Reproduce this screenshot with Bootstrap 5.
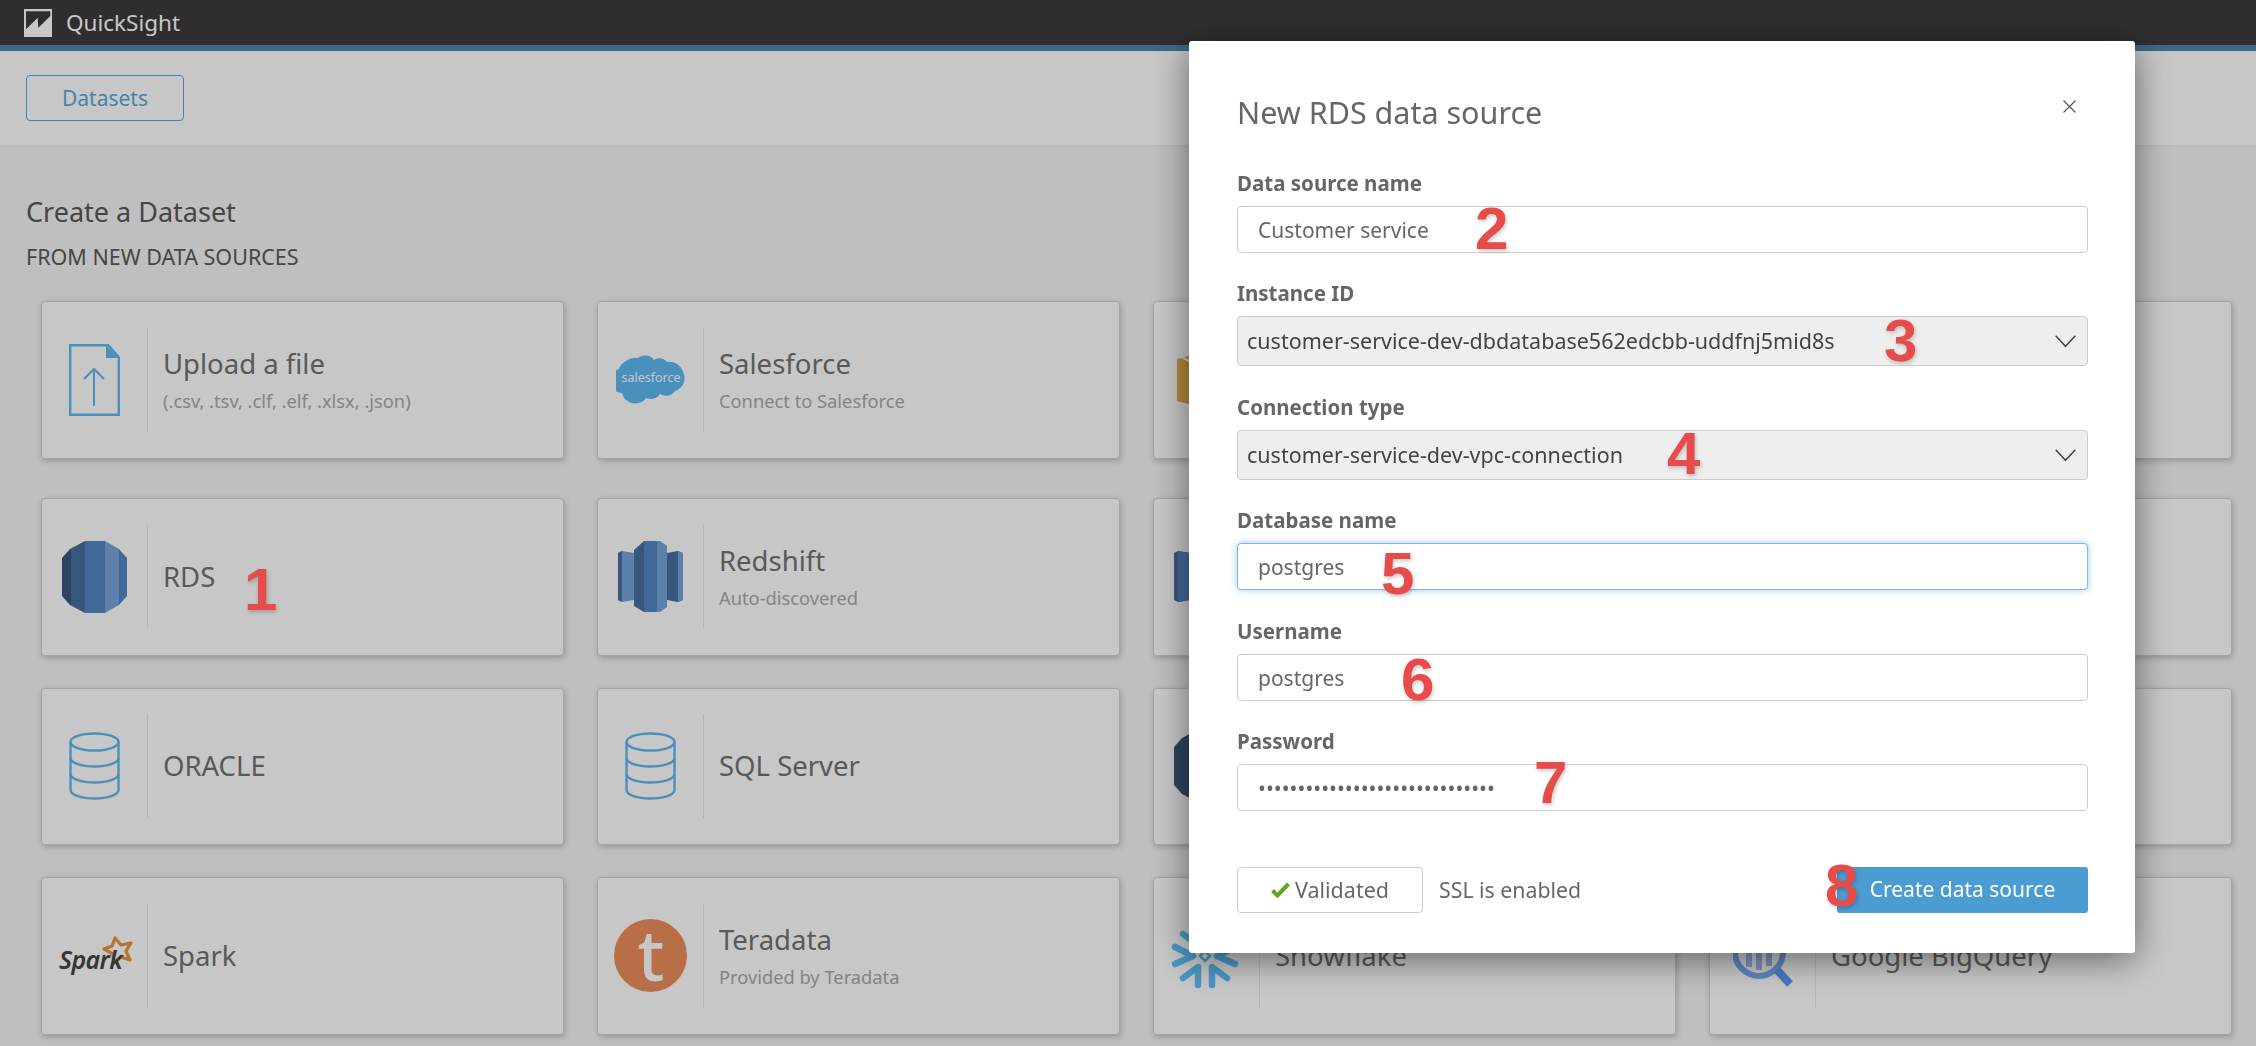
<!DOCTYPE html>
<html lang="en">
<head>
<meta charset="UTF-8">
<meta name="viewport" content="width=device-width, initial-scale=1">
<title>QuickSight</title>
<link href="https://cdn.jsdelivr.net/npm/bootstrap@5.3.0/dist/css/bootstrap.min.css" rel="stylesheet">
<style>
    html, body { height: 100%; overflow: hidden; }
    body { background: #f5f5f5; font-family: "Noto Sans", "Open Sans", sans-serif; color: #727272; }

    .qs-top { height: 45px; background: #3c3c3c; color: #fff; padding-left: 24px; gap: 14px; font-size: 22.5px; }
    .qs-strip { height: 6px; background: #4e85ab; }
    .qs-sub { height: 96px; background: #fff; border-bottom: 2px solid #efefef; padding: 24px 26px 0; }
    .qs-tab { width: 158px; height: 46px; line-height: 44px; padding: 0; font-size: 21px; color: #5ba8da; border: 1px solid #5ba8da; border-radius: 4px; background: transparent; }

    .qs-main { padding: 49px 24px 0 26px; }
    .qs-h { font-size: 27px; line-height: 32px; font-weight: 400; color: #5a5a5a; margin: 0; }
    .qs-sec { font-size: 21.500px; line-height: 26px; color: #5a5a5a; margin: 16px 0 0; }

    .src-wrap { padding: 31px 0 0 15px; }
    .src-row { --bs-gutter-x: 33px; --bs-gutter-y: 32px; }
    .src-first { margin-bottom: 7.500px; }
    .src-card { height: 157.500px; flex-direction: row; align-items: center; border: 1px solid #d4d4d4; border-radius: 4px; background: #fff; box-shadow: 1px 2px 6px rgba(0,0,0,.22); }
    .src-icon { width: 106px; height: 104px; border-right: 1px solid #eaeaea; flex-shrink: 0; }
    .src-text { padding-left: 15px; }
    .src-title { font-size: 27.500px; line-height: 36px; color: #727272; }
    .src-note { font-size: 18.300px; line-height: 24px; margin-top: 7px; color: #aaa; }

    .modal-backdrop { --bs-backdrop-opacity: .22; }
    .rds-dialog { margin: 41px 0 0 1189px; width: 946px; max-width: none; }
    .rds-box { height: 912px; border: 0; border-radius: 3px; box-shadow: 0 6px 36px rgba(0,0,0,.5); color: #666; }
    .rds-head { padding: 51px 47px 39px 48px; border: 0; }
    .rds-head h1 { font-size: 30.500px; line-height: 40px; font-weight: 400; color: #666; margin: 0; }
    .rds-close { width: 13px; height: 13px; padding: 0; margin: -1px 0 0; background: none; border: 0; position: absolute; left: 874px; top: 60px; }
    .rds-body { flex: 0 0 auto; padding: 0 47px 0 48px; }
    .rds-field { margin-bottom: 28px; }
    .rds-gap { margin-bottom: 29px; }
    .rds-field label { display: block; font-size: 20.500px; line-height: 24px; font-weight: 700; color: #666; margin-bottom: 11px; }
    .rds-input { height: 47px; padding: 0 20px; font-size: 21px; color: #666; border: 1px solid #ccc; border-radius: 4px; }
    .rds-input.is-on { border-color: #7fbbe4; box-shadow: 0 0 7px rgba(75,156,211,.55); }
    .rds-pick { height: 50px; padding: 0 50px 0 9px; font-size: 21.500px; color: #444; background-color: #eee; border: 1px solid #ccc; border-radius: 4px; background-position: right 11px center; background-size: 21px 13px; background-image: url("data:image/svg+xml,%3Csvg xmlns='http://www.w3.org/2000/svg' viewBox='0 0 21 13'%3E%3Cpath d='M.7.7l9.8 10.6L20.3.7' fill='none' stroke='%23444' stroke-width='1.5'/%3E%3C/svg%3E"); }
    .rds-foot { padding: 56px 47px 0 48px; border: 0; display: flex; align-items: center; }
    .rds-check { width: 186px; height: 46px; padding: 0; font-size: 21.500px; color: #666; border: 1px solid #ccc; border-radius: 4px; background: #fff; gap: 5px; }
    .rds-ssl { font-size: 21.300px; margin-left: 16px; color: #666; }
    .rds-go { width: 251px; height: 46px; padding: 0; margin-left: auto; font-size: 21px; color: #fff; background: #4b9cd3; border: 0; border-radius: 3px; }

    .note-num { position: absolute; font-family: "Liberation Sans", sans-serif; font-weight: 700; font-size: 60px; line-height: 60px; color: #e84c4a; text-shadow: 1px 2px 4px rgba(0,0,0,.22); z-index: 1060; }
    .n1 { left: 244px; top: 560px; }
    .n2 { left: 1475px; top: 199px; }
    .n3 { left: 1884px; top: 311px; }
    .n4 { left: 1667px; top: 424px; }
    .n5 { left: 1381px; top: 544px; }
    .n6 { left: 1401px; top: 650px; }
    .n7 { left: 1534px; top: 753px; }
    .n8 { left: 1825px; top: 856px; }
</style>
</head>
<body>

<div class="qs-top d-flex align-items-center">
    <svg width="28" height="28" viewBox="0 0 28 28"><rect width="28" height="28" fill="#fff"/><path d="M2 2.300h24.300v4.700L14.300 18.700 13.700 8.700 2 20.300z" fill="#3c3c3c"/></svg>
    <span>QuickSight</span>
</div>
<div class="qs-strip"></div>
<div class="qs-sub"><button type="button" class="btn qs-tab">Datasets</button></div>

<div class="qs-main">
    <h2 class="qs-h">Create a Dataset</h2>
    <p class="qs-sec">FROM NEW DATA SOURCES</p>

    <div class="src-wrap">
        <div class="row row-cols-4 src-row">
            <div class="col src-first"><div class="card src-card">
                <div class="src-icon d-flex align-items-center justify-content-center">
                    <svg width="51" height="72" viewBox="0 0 51 72"><path d="M1.2 1.2h38l10.6 12v57.6H1.2z" fill="none" stroke="#5eb9f1" stroke-width="2.4"/><path d="M37 1l13 13H37z" fill="#5eb9f1"/><path d="M25 62V25M15 35l10-10 10 10" fill="none" stroke="#5eb9f1" stroke-width="2"/></svg>
                </div>
                <div class="src-text"><div class="src-title">Upload a file</div><div class="src-note">(.csv, .tsv, .clf, .elf, .xlsx, .json)</div></div>
            </div></div>
            <div class="col src-first"><div class="card src-card">
                <div class="src-icon d-flex align-items-center justify-content-center">
                    <svg width="70" height="50" viewBox="0 0 70 50"><path d="M22 3c5-4 13-3 16 2 4-3 10-2 13 2 7-1 14 3 16 10 4 7 0 17-8 19-3 5-10 6-15 3-3 5-9 6-14 4-3 5-11 7-17 4-4-2-6-5-7-9-7 0-12-6-11-13 0-6 4-10 8-11 3-8 13-12 19-11z" fill="#5eb9f1"/><text x="35" y="27" text-anchor="middle" font-family="Noto Sans" font-size="12.500" fill="#fff">salesforce</text></svg>
                </div>
                <div class="src-text"><div class="src-title">Salesforce</div><div class="src-note">Connect to Salesforce</div></div>
            </div></div>
            <div class="col src-first"><div class="card src-card">
                <div class="src-icon d-flex align-items-center justify-content-center">
                    <svg width="60" height="58" viewBox="0 0 60 58"><path d="M0 8L30 0l30 8v42l-30 8L0 50z" fill="#e5b04a"/><path d="M0 4l14 7" stroke="#fff" stroke-width="2"/></svg>
                </div>
            </div></div>
            <div class="col src-first"><div class="card src-card"></div></div>

            <div class="col"><div class="card src-card">
                <div class="src-icon d-flex align-items-center justify-content-center">
                    <svg width="65" height="72" viewBox="0 0 65 72"><clipPath id="rds1"><path d="M0 17l8-9L23 0h20l14 8 8 9v38l-8 9-14 8H23L8 64l-8-9z"/></clipPath><g clip-path="url(#rds1)"><rect width="9" height="72" fill="#3a587b"/><rect x="9" width="14" height="72" fill="#4870a3"/><rect x="23" width="20" height="72" fill="#5687c5"/><rect x="43" width="14" height="72" fill="#76a4d9"/><rect x="57" width="8" height="72" fill="#5687c5"/></g></svg>
                </div>
                <div class="src-text"><div class="src-title">RDS</div></div>
            </div></div>
            <div class="col"><div class="card src-card">
                <div class="src-icon d-flex align-items-center justify-content-center">
                    <svg width="65" height="71" viewBox="0 0 65 71"><path d="M0 12l4-2 12 2v47l-12 2-4-2z" fill="#76a4d9"/><path d="M0 12l4-2v51l-4-2z" fill="#4870a3"/><path d="M16 9l10-9v71l-10-6z" fill="#4870a3"/><path d="M26 0h13v71H26z" fill="#5687c5"/><path d="M39 0h3l7 5v61l-7 5h-3z" fill="#76a4d9"/><path d="M49 12l11-2 5 2v47l-5 2-11-2z" fill="#4870a3"/><path d="M60 10l5 2v47l-5 2z" fill="#76a4d9"/></svg>
                </div>
                <div class="src-text"><div class="src-title">Redshift</div><div class="src-note">Auto-discovered</div></div>
            </div></div>
            <div class="col"><div class="card src-card">
                <div class="src-icon d-flex align-items-center justify-content-center">
                    <svg width="65" height="71" viewBox="0 0 65 71"><path d="M0 12l4-2 12 2v47l-12 2-4-2z" fill="#4870a3"/><path d="M4 10l12 2v47l-12 2z" fill="#5687c5"/></svg>
                </div>
            </div></div>
            <div class="col"><div class="card src-card"></div></div>

            <div class="col"><div class="card src-card">
                <div class="src-icon d-flex align-items-center justify-content-center">
                    <svg width="51" height="68" viewBox="0 0 51 68"><g fill="none" stroke="#5eb9f1" stroke-width="2.4"><ellipse cx="25.5" cy="10" rx="24" ry="8.5"/><path d="M1.5 10v48c0 5 11 8.500 24 8.500s24-3.500 24-8.500V10"/><path d="M1.500 26c0 5 11 8.500 24 8.500s24-3.500 24-8.500M1.500 42c0 5 11 8.500 24 8.500s24-3.500 24-8.500"/></g></svg>
                </div>
                <div class="src-text"><div class="src-title">ORACLE</div></div>
            </div></div>
            <div class="col"><div class="card src-card">
                <div class="src-icon d-flex align-items-center justify-content-center">
                    <svg width="51" height="68" viewBox="0 0 51 68"><g fill="none" stroke="#5eb9f1" stroke-width="2.4"><ellipse cx="25.5" cy="10" rx="24" ry="8.5"/><path d="M1.5 10v48c0 5 11 8.500 24 8.500s24-3.500 24-8.500V10"/><path d="M1.500 26c0 5 11 8.500 24 8.500s24-3.500 24-8.500M1.500 42c0 5 11 8.500 24 8.500s24-3.500 24-8.500"/></g></svg>
                </div>
                <div class="src-text"><div class="src-title">SQL Server</div></div>
            </div></div>
            <div class="col"><div class="card src-card">
                <div class="src-icon d-flex align-items-center justify-content-center">
                    <svg width="65" height="72" viewBox="0 0 65 72"><path d="M0 17l8-9L23 0h42v72H23L8 64l-8-9z" fill="#3a587b"/></svg>
                </div>
            </div></div>
            <div class="col"><div class="card src-card"></div></div>

            <div class="col"><div class="card src-card">
                <div class="src-icon d-flex align-items-center justify-content-center">
                    <svg width="78" height="42" viewBox="0 0 78 42"><path d="M59 3l6 7 10-2-5 8 4 9-9-3-7 6-1-9-9-5 8-3z" fill="none" stroke="#ec9341" stroke-width="3.200" stroke-linejoin="round"/><text x="3" y="34" font-family="Noto Sans" font-style="italic" font-weight="600" font-size="25" letter-spacing="-.6" fill="#444">Spark</text></svg>
                </div>
                <div class="src-text"><div class="src-title">Spark</div></div>
            </div></div>
            <div class="col"><div class="card src-card">
                <div class="src-icon d-flex align-items-center justify-content-center">
                    <svg width="73" height="73" viewBox="0 0 73 73"><circle cx="36.500" cy="36.500" r="36.500" fill="#ec8e5c"/><text x="37" y="62" text-anchor="middle" font-family="Noto Sans" font-weight="500" font-size="70" fill="#fff">t</text></svg>
                </div>
                <div class="src-text"><div class="src-title">Teradata</div><div class="src-note">Provided by Teradata</div></div>
            </div></div>
            <div class="col"><div class="card src-card">
                <div class="src-icon d-flex align-items-center justify-content-center">
                    <svg width="72" height="66" viewBox="0 0 72 66"><g stroke="#5fc2fb" stroke-width="6.500" stroke-linecap="round" stroke-linejoin="round" fill="none"><path d="M4 24l18 9-18 8M64 24l-18 9 18 8"/><path d="M27 62V44L12 55M41 62V44l15 11"/><path d="M27 4v18L12 11M41 4v18l15-11"/></g><path d="M34 28l5 5-5 5-5-5z" fill="none" stroke="#5fc2fb" stroke-width="2.500"/></svg>
                </div>
                <div class="src-text"><div class="src-title">Snowflake</div></div>
            </div></div>
            <div class="col"><div class="card src-card">
                <div class="src-icon d-flex align-items-center justify-content-center">
                    <svg width="60" height="62" viewBox="0 0 60 62"><circle cx="26" cy="27" r="24" fill="none" stroke="#7aacf6" stroke-width="6"/><path d="M13 24h6v18h-6zM23 20h6v25h-6zM33 26h6v15h-6z" fill="#9cc0f5"/><path d="M44 45l13 14" stroke="#5f9af6" stroke-width="8"/></svg>
                </div>
                <div class="src-text"><div class="src-title">Google BigQuery</div></div>
            </div></div>
        </div>
    </div>
</div>

<div class="modal-backdrop show"></div>

<div class="modal d-block" tabindex="-1">
    <div class="modal-dialog rds-dialog">
        <div class="modal-content rds-box">
            <div class="modal-header rds-head">
                <h1 class="modal-title">New RDS data source</h1>
                <button type="button" class="rds-close" aria-label="Close"><svg width="13" height="13" viewBox="0 0 13 13" class="d-block"><path d="M.5.5l12 12M12.500.5l-12 12" stroke="#555" stroke-width="1.200"/></svg></button>
            </div>
            <div class="modal-body rds-body">
                <div class="rds-field"><label for="f1">Data source name</label><input id="f1" class="form-control rds-input" value="Customer service"></div>
                <div class="rds-field rds-gap"><label for="f2">Instance ID</label><select id="f2" class="form-select rds-pick"><option>customer-service-dev-dbdatabase562edcbb-uddfnj5mid8s</option></select></div>
                <div class="rds-field"><label for="f3">Connection type</label><select id="f3" class="form-select rds-pick"><option>customer-service-dev-vpc-connection</option></select></div>
                <div class="rds-field rds-gap"><label for="f4">Database name</label><input id="f4" class="form-control rds-input is-on" value="postgres"></div>
                <div class="rds-field"><label for="f5">Username</label><input id="f5" class="form-control rds-input" value="postgres"></div>
                <div class="rds-field mb-0"><label for="f6">Password</label><input id="f6" type="password" class="form-control rds-input" value="123456789012345678901234567890"></div>
            </div>
            <div class="rds-foot">
                <button type="button" class="btn rds-check d-flex align-items-center justify-content-center"><svg width="19" height="16" viewBox="0 0 19 16"><path d="M1.500 8.500l5 5L17.500 2" fill="none" stroke="#5aaa20" stroke-width="4"/></svg>Validated</button>
                <span class="rds-ssl">SSL is enabled</span>
                <button type="button" class="btn rds-go">Create data source</button>
            </div>
        </div>
    </div>
</div>

<span class="note-num n1">1</span>
<span class="note-num n2">2</span>
<span class="note-num n3">3</span>
<span class="note-num n4">4</span>
<span class="note-num n5">5</span>
<span class="note-num n6">6</span>
<span class="note-num n7">7</span>
<span class="note-num n8">8</span>

<script src="https://cdn.jsdelivr.net/npm/bootstrap@5.3.0/dist/js/bootstrap.bundle.min.js"></script>
</body>
</html>
